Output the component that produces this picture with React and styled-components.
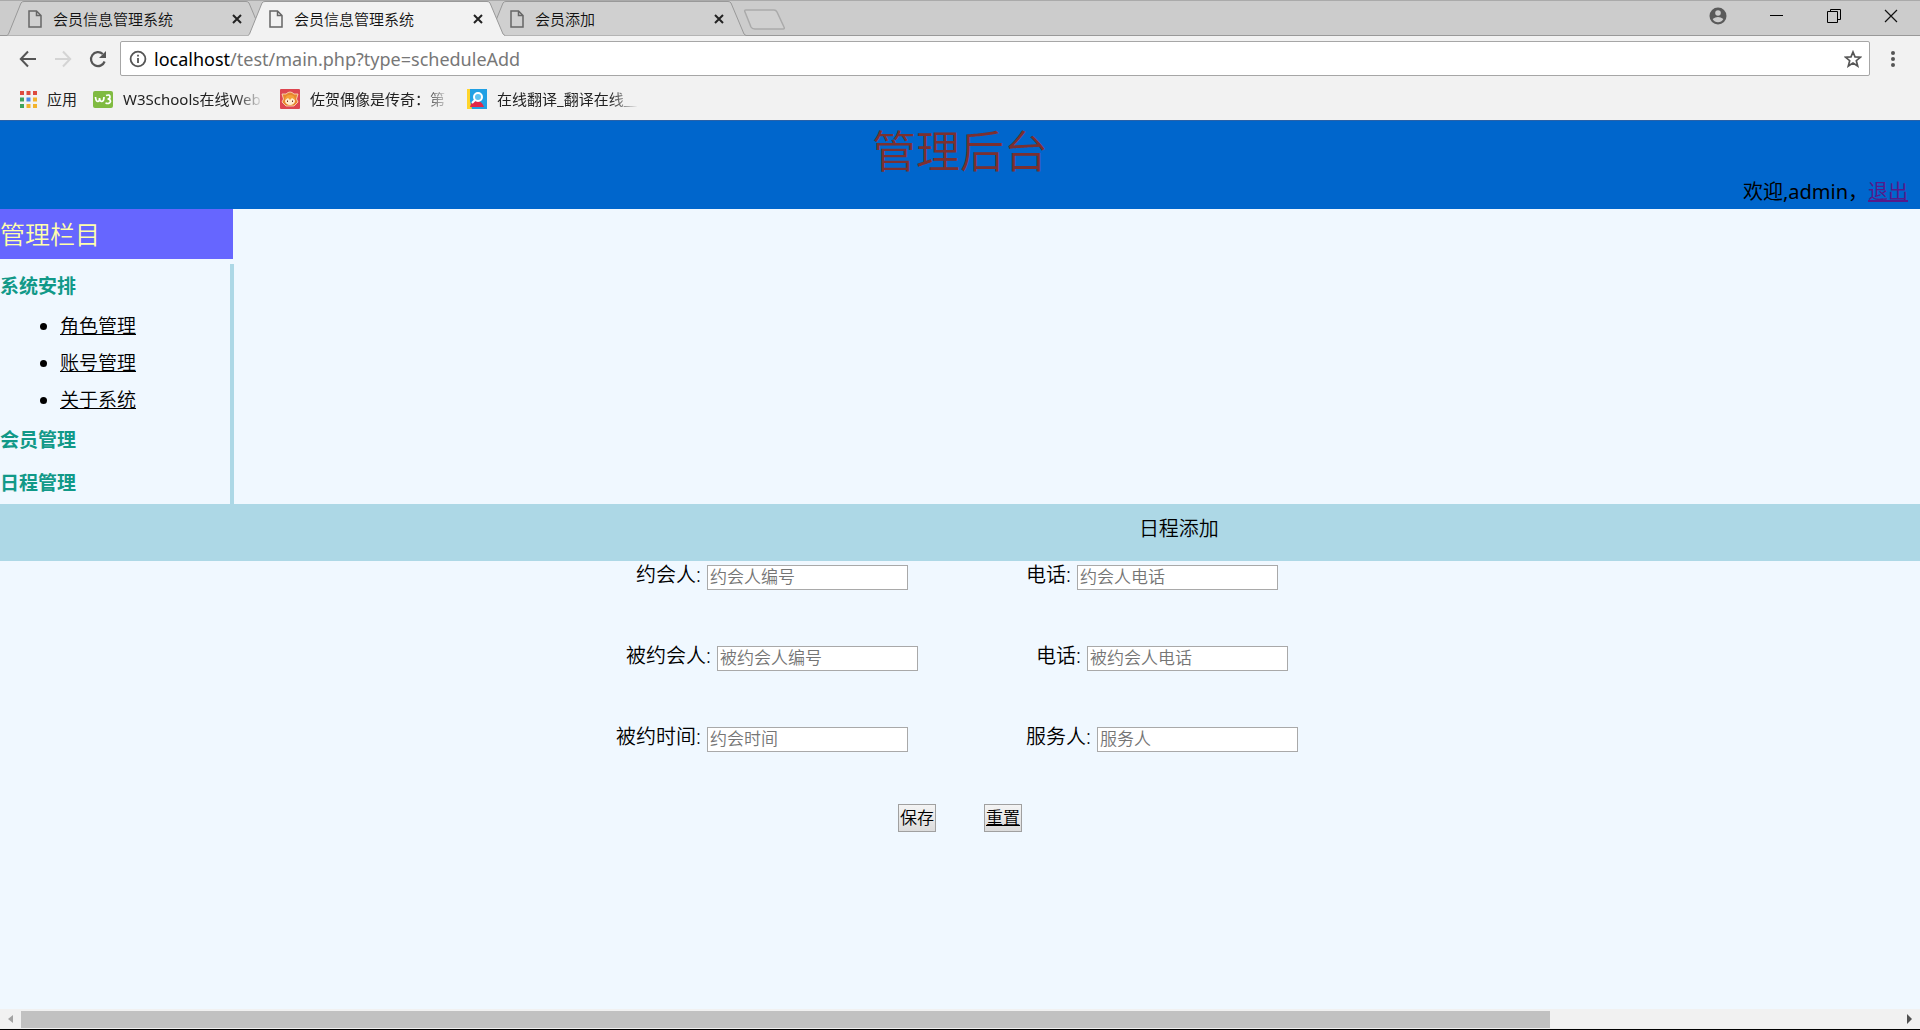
import React from "react";
import styled, { createGlobalStyle } from "styled-components";

const tabs = [
  { title: "会员信息管理系统" },
  { title: "会员信息管理系统", active: true },
  { title: "会员添加" },
];

const links = ["角色管理", "账号管理", "关于系统"];

const rows = [
  [
    { id: "inviter", label: "约会人:", placeholder: "约会人编号" },
    { id: "inviterTel", label: "电话:", placeholder: "约会人电话" },
  ],
  [
    { id: "invitee", label: "被约会人:", placeholder: "被约会人编号" },
    { id: "inviteeTel", label: "电话:", placeholder: "被约会人电话" },
  ],
  [
    { id: "time", label: "被约时间:", placeholder: "约会时间" },
    { id: "waiter", label: "服务人:", placeholder: "服务人" },
  ],
];

const appColors = [
  "#dd4b3e", "#dd4b3e", "#dd4b3e",
  "#3fa35b", "#4a86e8", "#f2b32c",
  "#3fa35b", "#f2b32c", "#f2b32c",
];

const BrowserTab = ({ title, active }) => (
  <Tab $active={active}>
    <TabShape viewBox="0 0 257 36" aria-hidden="true">
      <path
        d="M0 35.5 L1.5 34 L14 3 Q15 1.5 17 1.5 H239 Q241 1.5 242 3 L255 34 L257 35.5"
        fill={active ? "#f2f2f2" : "#d0d0d0"}
        stroke="#999"
      />
      {active && <path d="M1 35.5 H256" stroke="#f2f2f2" />}
    </TabShape>
    <TabTitle type="button">
      <svg width="14" height="18" viewBox="0 0 14 18" fill="none" stroke="#666" strokeWidth="1.5">
        <path d="M1 1 H8.5 L13 5.5 V17 H1 Z M8.5 1 V5.5 H13" />
      </svg>
      {title}
    </TabTitle>
    <CloseTab type="button" aria-label="关闭">
      <svg width="10" height="10" viewBox="0 0 10 10" stroke="#222" strokeWidth="2">
        <path d="M1 1 L9 9 M9 1 L1 9" />
      </svg>
    </CloseTab>
  </Tab>
);

const Browser = () => (
  <header>
    <TabStrip>
      <TabList>
        {tabs.map((tab, i) => (
          <BrowserTab key={i} {...tab} />
        ))}
      </TabList>
      <NewTab type="button" aria-label="新标签页">
        <svg width="44" height="22" viewBox="0 0 44 22">
          <path
            d="M3 1 H31 Q33 1 34 3 L41 18 Q42 20 40 20 H12 Q9 20 8 18 L2 3 Q1 1 3 1 Z"
            fill="#d0d0d0"
            stroke="#aaa"
            strokeWidth="1.5"
          />
        </svg>
      </NewTab>
      <WindowButtons>
        <IconButton type="button" aria-label="用户">
          <svg width="18" height="18" viewBox="0 0 18 18">
            <circle cx="9" cy="9" r="8.5" fill="#5a5a5a" />
            <circle cx="9" cy="6" r="2.8" fill="#ccc" />
            <path d="M3.6 12 Q9 7.8 14.4 12 Q12.4 15.2 9 15.2 Q5.6 15.2 3.6 12" fill="#ccc" />
          </svg>
        </IconButton>
        <IconButton type="button" aria-label="最小化">
          <svg width="14" height="14" viewBox="0 0 14 14" stroke="#000">
            <path d="M0 6.5 H13" />
          </svg>
        </IconButton>
        <IconButton type="button" aria-label="还原">
          <svg width="14" height="14" viewBox="0 0 14 14" fill="none" stroke="#000">
            <path d="M0.5 2.5 H10.5 V13.5 H0.5 Z M3.5 2 V0.5 H13.5 V10.5 H11" />
          </svg>
        </IconButton>
        <IconButton type="button" aria-label="关闭窗口">
          <svg width="14" height="14" viewBox="0 0 14 14" stroke="#111" strokeWidth="1.2">
            <path d="M1 1 L13 13 M13 1 L1 13" />
          </svg>
        </IconButton>
      </WindowButtons>
    </TabStrip>

    <Toolbar>
      <ToolButtons>
        <IconButton type="button" aria-label="后退">
          <svg width="18" height="18" viewBox="0 0 18 18" fill="none" stroke="#555" strokeWidth="2">
            <path d="M17 9 H2 M9 1.5 L1.8 9 L9 16.5" />
          </svg>
        </IconButton>
        <IconButton type="button" aria-label="前进">
          <svg width="18" height="18" viewBox="0 0 18 18" fill="none" stroke="#d4d4d4" strokeWidth="2">
            <path d="M1 9 H16 M9 1.5 L16.2 9 L9 16.5" />
          </svg>
        </IconButton>
        <IconButton type="button" aria-label="刷新">
          <svg width="18" height="18" viewBox="0 0 18 18" fill="none">
            <path d="M15.6 11.5 A7 7 0 1 1 13.8 4" stroke="#555" strokeWidth="2.2" />
            <path d="M17 1 V8 H10 Z" fill="#555" />
          </svg>
        </IconButton>
      </ToolButtons>
      <AddressBar>
        <svg width="18" height="18" viewBox="0 0 18 18" fill="none" stroke="#555" strokeWidth="1.8">
          <circle cx="9" cy="9" r="7.4" />
          <path d="M9 8 V13 M9 4.8 V6.6" />
        </svg>
        <Url>
          <b>localhost</b>/test/main.php?type=scheduleAdd
        </Url>
        <IconButton type="button" aria-label="收藏">
          <svg width="18" height="18" viewBox="0 0 18 18" fill="none" stroke="#555" strokeWidth="1.7">
            <path d="M9 2 L11 6.9 L16.5 7.2 L12.3 10.7 L13.7 16 L9 13 L4.3 16 L5.7 10.7 L1.5 7.2 L7 6.9 Z" />
          </svg>
        </IconButton>
      </AddressBar>
      <IconButton type="button" aria-label="菜单">
        <svg width="4" height="18" viewBox="0 0 4 18" fill="#555">
          <circle cx="2" cy="3" r="2" />
          <circle cx="2" cy="9" r="2" />
          <circle cx="2" cy="15" r="2" />
        </svg>
      </IconButton>
    </Toolbar>

    <Bookmarks>
      <Bookmark href="#apps">
        <svg width="17" height="17" viewBox="0 0 17 17">
          {appColors.map((color, i) => (
            <rect key={i} x={(i % 3) * 6.5} y={Math.floor(i / 3) * 6.5} width="4" height="4" fill={color} />
          ))}
        </svg>
        应用
      </Bookmark>
      <Bookmark href="#w3schools">
        <svg width="20" height="17" viewBox="0 0 20 17">
          <rect width="20" height="17" rx="2" fill="#80bb41" />
          <path
            d="M2.5 6 Q2.8 10.5 5 10.5 Q6.5 10.5 6.5 7 Q6.8 10.5 8.8 10.5 Q11 10 11 6 M13 4.5 Q17 3 17 6 Q17 8 14.5 8 Q17.5 8 17.5 10.5 Q16.5 13.5 12.5 12"
            fill="none"
            stroke="#fff"
            strokeWidth="1.7"
          />
        </svg>
        <Faded>W3Schools在线Web</Faded>
      </Bookmark>
      <Bookmark href="#saga">
        <svg width="20" height="20" viewBox="0 0 20 20">
          <rect width="20" height="20" rx="1" fill="#dd4650" />
          <path d="M2 5 L6 5 Q10 1 14 5 L18 5 L16.5 10 L18 13 L14 17 H6 L2 13 L3.5 10 Z" fill="#e9862f" stroke="#fbe3c0" strokeWidth="0.8" />
          <ellipse cx="10" cy="12" rx="5" ry="4" fill="#ffedcf" />
          <path d="M5 11 Q5 6 10 6 Q15 6 15 11 L12 9 L10 11 L8 9 Z" fill="#f3a23a" />
          <path d="M7.5 11.5 V13 M12.5 11.5 V13" stroke="#6b3327" />
        </svg>
        <Faded>佐贺偶像是传奇：第</Faded>
      </Bookmark>
      <Bookmark href="#translate">
        <svg width="20" height="20" viewBox="0 0 20 20">
          <rect width="20" height="20" fill="#20a0e4" />
          <path d="M0 0 H3 V12 L5 20 H0 Z" fill="#ffd52c" />
          <path d="M3 18 Q4 12 10 12 Q15 12 17 18 Z" fill="#e22747" />
          <circle cx="11" cy="8" r="4" fill="#5cc2f0" stroke="#fff" strokeWidth="2" />
          <path d="M8 11 L5 14" stroke="#fff" strokeWidth="2" />
        </svg>
        <Faded>在线翻译_翻译在线__</Faded>
      </Bookmark>
    </Bookmarks>
  </header>
);

const App = () => {
  return (
    <Page>
      <GlobalStyle />
      <Browser />
      <Main>
        <Top>
          <h1>管理后台</h1>
          <p>
            欢迎,admin，<a href="#logout">退出</a>
          </p>
        </Top>
        <Side>
          <SideTitle>管理栏目</SideTitle>
          <Nav>
            <NavHead>系统安排</NavHead>
            <NavList>
              {links.map((link) => (
                <li key={link}>
                  <a href="#menu">{link}</a>
                </li>
              ))}
            </NavList>
            <NavHead>会员管理</NavHead>
            <NavHead>日程管理</NavHead>
          </Nav>
        </Side>
        <Banner>日程添加</Banner>
        <Form onSubmit={(e) => e.preventDefault()}>
          {rows.map((row, i) => (
            <Row key={i}>
              {row.map(({ id, label, placeholder }) => (
                <Field key={id}>
                  <label htmlFor={id}>{label}</label>
                  <Input id={id} type="text" placeholder={placeholder} />
                </Field>
              ))}
            </Row>
          ))}
          <Actions>
            <FormButton type="submit">保存</FormButton>
            <FormButton type="reset" $underline>
              重置
            </FormButton>
          </Actions>
        </Form>
      </Main>
      <ScrollBar>
        <svg width="21" height="20" viewBox="0 0 21 20">
          <path d="M13 6 V14 L8 10 Z" fill="#a3a3a3" />
        </svg>
        <Track>
          <Thumb />
        </Track>
        <svg width="21" height="20" viewBox="0 0 21 20">
          <path d="M8 5 V15 L13 10 Z" fill="#505050" />
        </svg>
      </ScrollBar>
    </Page>
  );
};

export default App;

const GlobalStyle = createGlobalStyle`
  * {
    box-sizing: border-box;
  }

  body {
    margin: 0;
    color: #000;
    background-color: #f0f8ff;
    font-family: "Noto Sans", "Noto Sans CJK SC", sans-serif;
    font-weight: 350;
  }

  h1, h2, h3, p, ul {
    margin: 0;
    padding: 0;
    font-weight: inherit;
  }

  button {
    font-family: inherit;
    font-weight: inherit;
    cursor: pointer;
  }

  svg {
    display: block;
    flex-shrink: 0;
  }
`;

const Page = styled.div`
  min-height: 100vh;
  display: flex;
  flex-direction: column;
`;

const TabStrip = styled.div`
  display: flex;
  align-items: flex-start;
  height: 36px;
  padding-left: 7px;
  background-color: #ccc;
  box-shadow: inset 0 1px #aaa, inset 0 -1px #999;
`;

const TabList = styled.ul`
  display: flex;
  list-style: none;
`;

const Tab = styled.li`
  position: relative;
  z-index: ${(props) => (props.$active ? 1 : 0)};
  display: flex;
  align-items: center;
  justify-content: space-between;
  width: 257px;
  height: 36px;
  margin-right: -16px;
  padding: 1px 22px 0 21px;
`;

const TabShape = styled.svg`
  position: absolute;
  inset: 0;
  width: 100%;
  height: 100%;
  fill: none;
`;

const TabTitle = styled.button`
  position: relative;
  display: flex;
  align-items: center;
  gap: 11px;
  padding: 0;
  border: 0;
  background: none;
  color: #111;
  font-size: 15px;
  line-height: 16px;
`;

const CloseTab = styled.button`
  position: relative;
  padding: 0;
  border: 0;
  background: none;
`;

const IconButton = styled.button`
  padding: 0;
  border: 0;
  background: none;
`;

const NewTab = styled(IconButton)`
  margin: 9px 0 0 13px;
`;

const WindowButtons = styled.div`
  display: flex;
  align-items: center;
  gap: 43px;
  height: 32px;
  margin-left: auto;
  padding-right: 22px;
`;

const Toolbar = styled.div`
  display: flex;
  align-items: center;
  padding: 5px 25px 5px 19px;
  background-color: #f2f2f2;
`;

const ToolButtons = styled.div`
  display: flex;
  gap: 17px;
  margin-right: 13px;
`;

const AddressBar = styled.div`
  flex: 1;
  display: flex;
  align-items: center;
  gap: 7px;
  height: 35px;
  margin-right: 21px;
  padding: 0 7px 0 8px;
  border: 1px solid #a6a6a6;
  border-radius: 2px;
  background-color: #fff;
`;

const Url = styled.span`
  flex: 1;
  color: #777;
  font-size: 18px;
  font-weight: 400;
  line-height: 24px;

  b {
    color: #000;
    font-weight: 400;
  }
`;

const Bookmarks = styled.nav`
  display: flex;
  align-items: center;
  gap: 16px;
  height: 39px;
  padding: 0 20px 3px;
  background-color: #f2f2f2;
`;

const Bookmark = styled.a`
  display: flex;
  align-items: center;
  gap: 10px;
  color: #222;
  font-size: 15px;
  font-weight: 400;
  line-height: 20px;
  text-decoration: none;
`;

const Faded = styled.span`
  width: 141px;
  white-space: nowrap;
  mask-image: linear-gradient(to right, #000 80%, transparent);
`;

const Main = styled.main`
  flex: 1;
  overflow: hidden;
`;

const Top = styled.div`
  height: 89px;
  padding: 2px 12px 0;
  background-color: #0066cc;
  border-top: 1px solid #2a62a8;

  h1 {
    color: #7b3030;
    font-size: 44px;
    line-height: 56px;
    text-align: center;
  }

  p {
    font-size: 20px;
    font-weight: 400;
    line-height: 26px;
    text-align: right;
  }

  a {
    color: #551a8b;
  }
`;

const Side = styled.aside`
  width: 234px;
`;

const SideTitle = styled.h2`
  margin: 0 1px 5px 0;
  background-color: #6666ff;
  color: #ffffaa;
  font-size: 25px;
  line-height: 50px;
`;

const Nav = styled.nav`
  height: 240px;
  padding-top: 1px;
  border-right: 4px solid #add8e6;
`;

const NavHead = styled.h3`
  color: #119988;
  font-size: 19px;
  font-weight: 700;
  line-height: 43px;
`;

const NavList = styled.ul`
  padding-left: 60px;
  font-size: 19px;
  line-height: 37px;

  a {
    color: #000;
  }
`;

/* wider than the window, so its title sits right of the middle */
const Banner = styled.h2`
  width: 122.8%;
  height: 57px;
  background-color: #add8e6;
  font-size: 20px;
  line-height: 50px;
  text-align: center;
`;

const Form = styled.form`
  padding-right: 6px;
`;

const Row = styled.div`
  display: flex;
  justify-content: center;
  gap: 118px;
  height: 81px;
`;

const Field = styled.div`
  display: flex;
  align-items: flex-start;
  gap: 6px;
  font-size: 20px;
  line-height: 28px;
`;

const Input = styled.input`
  width: 201px;
  height: 25px;
  margin-top: 4px;
  padding: 0 2px 2px;
  border: 1px solid #a9a9a9;
  background-color: #fff;
  font-family: inherit;
  font-size: 17px;
  font-weight: inherit;

  &::placeholder {
    color: #757575;
  }
`;

const Actions = styled.div`
  display: flex;
  justify-content: center;
  gap: 48px;
  padding-left: 6px;
`;

const FormButton = styled.button`
  width: 38px;
  height: 28px;
  padding: 0;
  border: 1px solid #a0a0a0;
  background: linear-gradient(#f4f4f4, #dcdcdc);
  color: #000;
  font-size: 17px;
  line-height: 24px;
  text-decoration: ${(props) => (props.$underline ? "underline" : "none")};
`;

const ScrollBar = styled.div`
  display: flex;
  height: 21px;
  border-bottom: 1px solid #000;
  background-color: #f1f1f1;
`;

const Track = styled.div`
  flex: 1;
  padding: 2px 0 1px;
`;

const Thumb = styled.div`
  width: 81.4%;
  height: 100%;
  background-color: #c1c1c1;
`;
